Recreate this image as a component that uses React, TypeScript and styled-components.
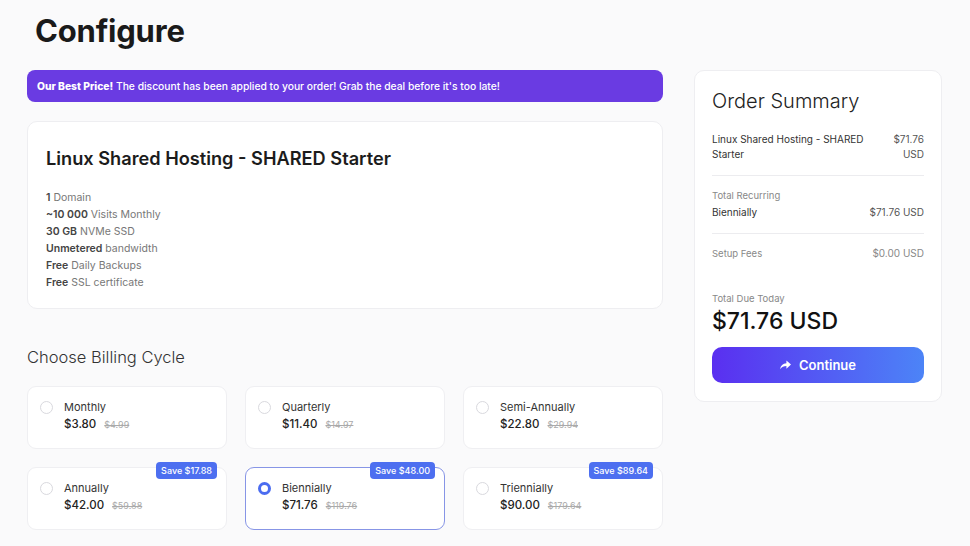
import React, { FC } from 'react';
import styled, { createGlobalStyle } from 'styled-components';

const GlobalStyle = createGlobalStyle`
    html, body {
        margin: 0;
        padding: 0;
        background: #fafafb;
        font-family: Inter, "Open Sans", sans-serif;
        color: #222;
    }
    * {
        box-sizing: border-box;
    }
`;

const Page = styled.div`
    width: 970px;
    height: 546px;
    overflow: hidden;
    padding: 0 28px 0 27px;
`;

const Title = styled.h1`
    margin: 0;
    padding: 12px 0 0 8px;
    height: 70px;
    font-size: 31px;
    font-weight: 700;
    color: #1a1a1a;
    letter-spacing: -0.2px;
`;

const Columns = styled.div`
    display: flex;
    gap: 31px;
    align-items: flex-start;
`;

const MainCol = styled.div`
    width: 636px;
    display: flex;
    flex-direction: column;
`;

const Banner = styled.div`
    height: 32px;
    border-radius: 8px;
    background: #6a3be2;
    color: #fff;
    font-size: 10.3px;
    font-weight: 500;
    display: flex;
    align-items: center;
    padding-left: 10px;

    b {
        font-weight: 800;
    }
`;

const Card = styled.div`
    background: #fff;
    border: 1px solid #eeeef1;
    border-radius: 10px;
`;

const ProductCard = styled(Card)`
    margin-top: 19px;
    height: 188px;
    padding: 25px 18px 0;
`;

const ProductName = styled.h2`
    margin: 0 0 22px;
    font-size: 18.2px;
    font-weight: 600;
    color: #1c1c1c;
`;

const FeatureList = styled.ul`
    list-style: none;
    margin: 0;
    padding: 0;
    display: flex;
    flex-direction: column;
    gap: 3px;
`;

const Feature = styled.li`
    font-size: 10.5px;
    line-height: 14px;
    color: #777;

    b {
        font-weight: 600;
        color: #444;
    }
`;

const SectionTitle = styled.h3`
    margin: 38px 0 19px;
    font-size: 16.5px;
    font-weight: 300;
    color: #333;
`;

const CycleGrid = styled.div`
    display: grid;
    grid-template-columns: repeat(3, 200px);
    grid-auto-rows: 63px;
    gap: 18px;
`;

const CycleCard = styled.label<{ $selected?: boolean }>`
    position: relative;
    display: flex;
    align-items: flex-start;
    gap: 11px;
    padding: 13px 16px 0 12px;
    background: #fff;
    border: 1px solid ${p => (p.$selected ? '#8795e6' : '#efeff2')};
    border-radius: 9px;
`;

const Radio = styled.span<{ $checked?: boolean }>`
    flex: none;
    margin-top: 1px;
    width: 13px;
    height: 13px;
    border-radius: 50%;
    border: ${p => (p.$checked ? '3.5px solid #4b6cf0' : '1.5px solid #d9d9de')};
    background: #fff;
`;

const CycleInfo = styled.div`
    display: flex;
    flex-direction: column;
    gap: 2px;
`;

const CycleName = styled.span`
    font-size: 11px;
    line-height: 15px;
    color: #333;
`;

const PriceRow = styled.div`
    display: flex;
    align-items: baseline;
    gap: 8px;
`;

const Price = styled.span`
    font-size: 11.5px;
    font-weight: 500;
    color: #222;
`;

const OldPrice = styled.span`
    font-size: 9px;
    color: #aaa;
    text-decoration: line-through;
`;

const SaveBadge = styled.span`
    position: absolute;
    top: -6px;
    right: 9px;
    height: 17px;
    padding: 0 5px;
    border-radius: 4px;
    background: #4d6ff0;
    color: #fff;
    font-size: 9px;
    font-weight: 500;
    display: flex;
    align-items: center;
`;

const Summary = styled(Card)`
    width: 248px;
    height: 332px;
    padding: 17px 17px 0;
`;

const SummaryTitle = styled.h2`
    margin: 0 0 18px;
    font-size: 20px;
    line-height: 26px;
    font-weight: 300;
    color: #222;
`;

const SummaryBlock = styled.div<{ $last?: boolean }>`
    padding-bottom: 13px;
    margin-bottom: 12px;
    border-bottom: ${p => (p.$last ? 'none' : '1px solid #ececef')};
    display: flex;
    flex-direction: column;
    gap: 2px;
`;

const SummaryRow = styled.div`
    display: flex;
    justify-content: space-between;
    align-items: flex-start;
    gap: 12px;
    font-size: 10px;
    line-height: 15px;
    color: #333;
`;

const Muted = styled.span`
    color: #888;
    font-size: 9.5px;
    line-height: 15px;
`;

const Amount = styled.span<{ $muted?: boolean }>`
    text-align: right;
    color: ${p => (p.$muted ? '#888' : '#555')};
`;

const DueLabel = styled.div`
    font-size: 9.5px;
    line-height: 15px;
    color: #888;
    margin-top: 17px;
`;

const DueValue = styled.div`
    font-size: 23px;
    line-height: 28px;
    font-weight: 500;
    color: #111;
    margin: 1px 0 12px;
`;

const ContinueButton = styled.button`
    width: 100%;
    height: 36px;
    border: none;
    border-radius: 10px;
    background: linear-gradient(90deg, #5a2ff0 0%, #4c84f7 100%);
    color: #fff;
    font-family: inherit;
    font-size: 13px;
    font-weight: 600;
    display: flex;
    align-items: center;
    justify-content: center;
    gap: 8px;
`;

const ShareIcon: FC = () => (
    <svg width="11" height="10" viewBox="0 0 12 10" fill="#fff">
        <path d="M7 0 L12 4.5 L7 9 V6.2 C4 6.2 2 7.2 0 9.5 C0.8 5.8 3 3.6 7 3.2 Z" />
    </svg>
);

const cycles = [
    { name: 'Monthly', price: '$3.80', old: '$4.99' },
    { name: 'Quarterly', price: '$11.40', old: '$14.97' },
    { name: 'Semi-Annually', price: '$22.80', old: '$29.94' },
    { name: 'Annually', price: '$42.00', old: '$59.88', save: 'Save $17.88' },
    { name: 'Biennially', price: '$71.76', old: '$119.76', save: 'Save $48.00', selected: true },
    { name: 'Triennially', price: '$90.00', old: '$179.64', save: 'Save $89.64' }
];

const App: FC = () => (
    <Page>
        <GlobalStyle />
        <Title>Configure</Title>
        <Columns>
            <MainCol>
                <Banner>
                    <b>Our Best Price!</b>&nbsp;The discount has been applied to your order! Grab the deal before it's too late!
                </Banner>
                <ProductCard>
                    <ProductName>Linux Shared Hosting - SHARED Starter</ProductName>
                    <FeatureList>
                        <Feature><b>1</b> Domain</Feature>
                        <Feature><b>~10 000</b> Visits Monthly</Feature>
                        <Feature><b>30 GB</b> NVMe SSD</Feature>
                        <Feature><b>Unmetered</b> bandwidth</Feature>
                        <Feature><b>Free</b> Daily Backups</Feature>
                        <Feature><b>Free</b> SSL certificate</Feature>
                    </FeatureList>
                </ProductCard>
                <SectionTitle>Choose Billing Cycle</SectionTitle>
                <CycleGrid>
                    {cycles.map(c => (
                        <CycleCard key={c.name} $selected={c.selected}>
                            <Radio $checked={c.selected} />
                            <CycleInfo>
                                <CycleName>{c.name}</CycleName>
                                <PriceRow>
                                    <Price>{c.price}</Price>
                                    <OldPrice>{c.old}</OldPrice>
                                </PriceRow>
                            </CycleInfo>
                            {c.save && <SaveBadge>{c.save}</SaveBadge>}
                        </CycleCard>
                    ))}
                </CycleGrid>
            </MainCol>
            <Summary>
                <SummaryTitle>Order Summary</SummaryTitle>
                <SummaryBlock>
                    <SummaryRow>
                        <span>Linux Shared Hosting - SHARED Starter</span>
                        <Amount>$71.76<br />USD</Amount>
                    </SummaryRow>
                </SummaryBlock>
                <SummaryBlock>
                    <Muted>Total Recurring</Muted>
                    <SummaryRow>
                        <span>Biennially</span>
                        <Amount>$71.76 USD</Amount>
                    </SummaryRow>
                </SummaryBlock>
                <SummaryBlock $last>
                    <SummaryRow>
                        <Muted>Setup Fees</Muted>
                        <Amount $muted>$0.00 USD</Amount>
                    </SummaryRow>
                </SummaryBlock>
                <DueLabel>Total Due Today</DueLabel>
                <DueValue>$71.76 USD</DueValue>
                <ContinueButton>
                    <ShareIcon />
                    Continue
                </ContinueButton>
            </Summary>
        </Columns>
    </Page>
);

export default App;
